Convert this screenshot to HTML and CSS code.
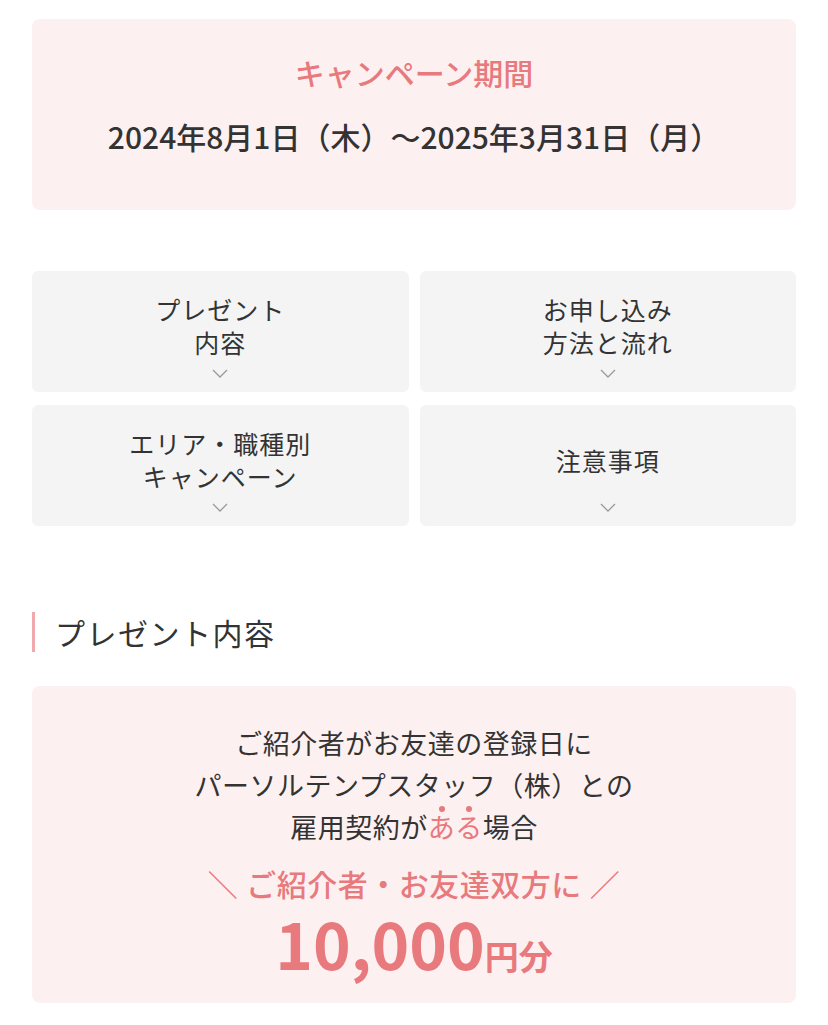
FILE: index.html
```html
<!DOCTYPE html>
<html lang="ja">
<head>
    <meta charset="UTF-8">
    <meta name="viewport" content="width=device-width, initial-scale=1.0">
    <title>キャンペーン</title>
    <link rel="stylesheet" href="styles.css">
</head>
<body>
    <div class="container">
        <div class="period">
            <p class="period-title">キャンペーン期間</p>
            <p class="period-date">2024年8月1日（木）～2025年3月31日（月）</p>
        </div>

        <!-- page index -->
        <div class="nav-grid">
            <a class="nav-item" href="#present">
                <span class="nav-label">プレゼント<br>内容</span>
                <svg class="chevron" viewBox="0 0 16 9" width="16" height="9"><polyline points="1,1 8,8 15,1"/></svg>
            </a>
            <a class="nav-item" href="#flow">
                <span class="nav-label">お申し込み<br>方法と流れ</span>
                <svg class="chevron" viewBox="0 0 16 9" width="16" height="9"><polyline points="1,1 8,8 15,1"/></svg>
            </a>
            <a class="nav-item" href="#area">
                <span class="nav-label">エリア・職種別<br>キャンペーン</span>
                <svg class="chevron" viewBox="0 0 16 9" width="16" height="9"><polyline points="1,1 8,8 15,1"/></svg>
            </a>
            <a class="nav-item" href="#notes">
                <span class="nav-label">注意事項</span>
                <svg class="chevron" viewBox="0 0 16 9" width="16" height="9"><polyline points="1,1 8,8 15,1"/></svg>
            </a>
        </div>

        <h2 class="section-title" id="present">プレゼント内容</h2>
        <div class="present-box">
            <p class="present-text">ご紹介者がお友達の登録日に<br>パーソルテンプスタッフ（株）との<br>雇用契約が<span class="em">あ</span><span class="em">る</span>場合</p>
            <p class="present-lead"><span class="slash">＼</span>ご紹介者・お友達双方に<span class="slash">／</span></p>
            <p class="present-amount">10,000<span class="unit">円分</span></p>
        </div>
    </div>
</body>
</html>
```

FILE: styles.css
```css
body {
    margin: 0;
    background-color: #fff;
    color: #333;
    font-family: "Noto Sans CJK JP", "Noto Sans", sans-serif;
}

p {
    margin: 0;
}

.container {
    padding: 19px 32px 0;
}

.period {
    background-color: #fdf0f0;
    border-radius: 8px;
    padding: 33px 20px 54px;
    text-align: center;
}

.period-title {
    color: #e8797d;
    font-size: 30px;
    font-weight: 500;
    line-height: 40px;
}

.period-date {
    margin-top: 24px;
    font-size: 30px;
    font-weight: 500;
    line-height: 40px;
}

.nav-grid {
    display: grid;
    grid-template-columns: 1fr 1fr;
    column-gap: 11px;
    row-gap: 13px;
    margin-top: 61px;
}

.nav-item {
    display: flex;
    flex-direction: column;
    align-items: center;
    height: 121px;
    box-sizing: border-box;
    padding: 12px 10px 14px;
    background-color: #f4f4f4;
    border-radius: 6px;
    color: #333;
    text-decoration: none;
}

.nav-label {
    flex: 1;
    display: flex;
    align-items: center;
    justify-content: center;
    text-align: center;
    font-size: 25px;
    line-height: 33px;
    letter-spacing: 1px;
}

.chevron {
    fill: none;
    stroke: #999;
    stroke-width: 1.3;
}

.section-title {
    margin: 86px 0 34px;
    padding-left: 20px;
    border-left: 3px solid #f0a9ad;
    font-size: 30px;
    font-weight: 400;
    line-height: 40px;
    letter-spacing: 1.5px;
}

.present-box {
    background-color: #fdf0f0;
    border-radius: 8px;
    padding: 36px 20px 9px;
    text-align: center;
}

.present-text {
    font-size: 27px;
    line-height: 42px;
    letter-spacing: 0.5px;
}

.em {
    position: relative;
    color: #e8797d;
}

.em::before {
    content: "";
    position: absolute;
    top: -1px;
    left: 50%;
    width: 6px;
    height: 6px;
    margin-left: -3px;
    border-radius: 50%;
    background-color: #e8797d;
}

.present-lead {
    margin-top: 14px;
    color: #e8797d;
    font-size: 30px;
    font-weight: 500;
    line-height: 42px;
    letter-spacing: 0.5px;
}

.slash {
    font-weight: 400;
    margin: 0 8px;
}

.present-amount {
    color: #e8797d;
    font-size: 64px;
    font-weight: 700;
    line-height: 76px;
}

.unit {
    font-size: 34px;
}
```
